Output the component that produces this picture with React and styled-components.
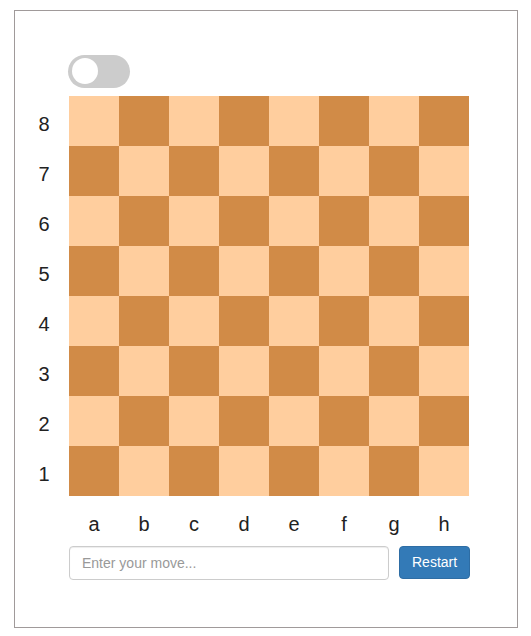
import React, { useState } from 'react'
import styled, { createGlobalStyle } from 'styled-components'

const GlobalStyle = createGlobalStyle`
  body {
    margin: 0;
    font-family: "Liberation Sans", Arial, sans-serif;
    background: #fff;
  }
`

const Frame = styled.div`
  box-sizing: border-box;
  margin: 10px 0 0 14px;
  width: 504px;
  height: 618px;
  border: 1px solid #a09a9a;
  padding: 44px 0 0 0;
`

const ToggleRow = styled.div`
  padding-left: 53px;
  height: 33px;
  margin-bottom: 8px;
`

const Switch = styled.button`
  position: relative;
  width: 62px;
  height: 33px;
  border: none;
  padding: 0;
  border-radius: 17px;
  background: ${p => (p.on ? '#2196f3' : '#ccc')};
  cursor: pointer;
  transition: background 0.2s;

  &::before {
    content: '';
    position: absolute;
    top: 3px;
    left: ${p => (p.on ? '32px' : '4px')};
    width: 26px;
    height: 26px;
    border-radius: 50%;
    background: #fff;
    transition: left 0.2s;
  }
`

const BoardRow = styled.div`
  display: flex;
`

const Ranks = styled.div`
  width: 54px;
  display: flex;
  flex-direction: column;
`

const Label = styled.div`
  box-sizing: border-box;
  height: 50px;
  padding-top: 6px;
  line-height: 44px;
  text-align: center;
  font-size: 20px;
  color: #222;
`

const RankLabel = styled(Label)`
  padding-left: 4px;
`

const Board = styled.div`
  display: grid;
  grid-template-columns: repeat(8, 50px);
  grid-template-rows: repeat(8, 50px);
`

const Square = styled.div`
  background: ${p => (p.dark ? '#d18b47' : '#ffce9e')};
`

const Files = styled.div`
  display: flex;
  padding-left: 54px;
`

const FileLabel = styled(Label)`
  width: 50px;
`

const MoveForm = styled.form`
  display: flex;
  gap: 10px;
  padding-left: 54px;
`

const MoveInput = styled.input`
  box-sizing: border-box;
  width: 320px;
  height: 34px;
  padding: 6px 12px;
  font-family: inherit;
  font-size: 14px;
  color: #555;
  border: 1px solid #ccc;
  border-radius: 4px;
  box-shadow: inset 0 1px 1px rgba(0, 0, 0, 0.075);
  outline: none;

  &::placeholder {
    color: #999;
  }
`

const RestartButton = styled.button`
  box-sizing: border-box;
  height: 33px;
  padding: 6px 12px;
  font-family: inherit;
  font-size: 14px;
  line-height: 1.42857;
  color: #fff;
  background: #337ab7;
  border: 1px solid #2e6da4;
  border-radius: 4px;
  cursor: pointer;
`

const files = ['a', 'b', 'c', 'd', 'e', 'f', 'g', 'h']
const ranks = [8, 7, 6, 5, 4, 3, 2, 1]

export default function App() {
  const [flipped, setFlipped] = useState(false)
  const [move, setMove] = useState('')

  return (
    <>
      <GlobalStyle />
      <Frame>
        <ToggleRow>
          <Switch on={flipped} onClick={() => setFlipped(!flipped)} />
        </ToggleRow>
        <BoardRow>
          <Ranks>
            {ranks.map(r => (
              <RankLabel key={r}>{r}</RankLabel>
            ))}
          </Ranks>
          <Board>
            {ranks.map((r, ri) =>
              files.map((f, fi) => (
                <Square key={f + r} dark={(ri + fi) % 2 === 1} />
              ))
            )}
          </Board>
        </BoardRow>
        <Files>
          {files.map(f => (
            <FileLabel key={f}>{f}</FileLabel>
          ))}
        </Files>
        <MoveForm onSubmit={e => e.preventDefault()}>
          <MoveInput
            placeholder="Enter your move..."
            value={move}
            onChange={e => setMove(e.target.value)}
          />
          <RestartButton type="button" onClick={() => setMove('')}>
            Restart
          </RestartButton>
        </MoveForm>
      </Frame>
    </>
  )
}
